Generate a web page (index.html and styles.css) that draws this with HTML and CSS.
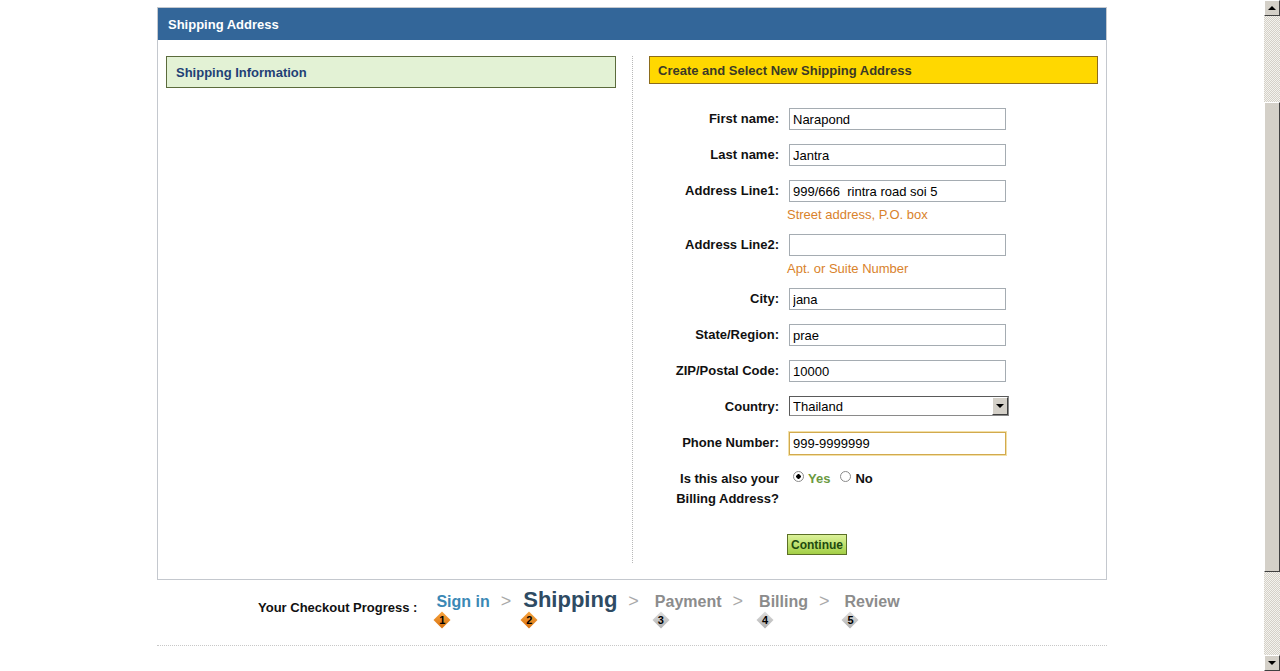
FILE: index.html
```html
<!DOCTYPE html>
<html lang="en">
<head>
  <meta charset="UTF-8">
  <title>Shipping Address</title>
  <link rel="stylesheet" href="styles.css">
</head>
<body>
  <div class="page">
    <div class="checkout">
      <div class="panel">
        <div class="panel-title">Shipping Address</div>
        <div class="panel-body">
          <div class="col-left">
            <div class="info-box">Shipping Information</div>
          </div>
          <div class="col-right">
            <div class="new-box">Create and Select New Shipping Address</div>
            <form class="address-form">
              <div class="row">
                <label for="first">First name:</label>
                <div class="field"><input type="text" id="first" value="Narapond"></div>
              </div>
              <div class="row">
                <label for="last">Last name:</label>
                <div class="field"><input type="text" id="last" value="Jantra"></div>
              </div>
              <div class="row">
                <label for="addr1">Address Line1:</label>
                <div class="field">
                  <input type="text" id="addr1" value="999/666  rintra road soi 5">
                  <div class="hint">Street address, P.O. box</div>
                </div>
              </div>
              <div class="row">
                <label for="addr2">Address Line2:</label>
                <div class="field">
                  <input type="text" id="addr2" value="">
                  <div class="hint">Apt. or Suite Number</div>
                </div>
              </div>
              <div class="row">
                <label for="city">City:</label>
                <div class="field"><input type="text" id="city" value="jana"></div>
              </div>
              <div class="row">
                <label for="state">State/Region:</label>
                <div class="field"><input type="text" id="state" value="prae"></div>
              </div>
              <div class="row">
                <label for="zip">ZIP/Postal Code:</label>
                <div class="field"><input type="text" id="zip" value="10000"></div>
              </div>
              <div class="row">
                <label for="country">Country:</label>
                <div class="field">
                  <div class="select-wrap">
                    <select id="country">
                      <option>Thailand</option>
                    </select>
                    <span class="select-arrow"></span>
                  </div>
                </div>
              </div>
              <div class="row">
                <label for="phone">Phone Number:</label>
                <div class="field"><input type="text" id="phone" class="focused" value="999-9999999"></div>
              </div>
              <div class="row row-billing">
                <label>Is this also your<br>Billing Address?</label>
                <div class="field choices">
                  <input type="radio" name="billing" id="billYes" checked>
                  <label for="billYes" class="choice-yes">Yes</label>
                  <input type="radio" name="billing" id="billNo">
                  <label for="billNo" class="choice-no">No</label>
                </div>
              </div>
              <div class="row row-submit">
                <span></span>
                <div class="field"><button type="button" class="btn-continue">Continue</button></div>
              </div>
            </form>
          </div>
        </div>
      </div>

      <div class="progress">
        <div class="progress-label">Your Checkout Progress :</div>
        <div class="step step-done">
          <span class="step-name">Sign in</span>
          <span class="badge">1</span>
        </div>
        <span class="sep">&gt;</span>
        <div class="step step-current">
          <span class="step-name">Shipping</span>
          <span class="badge">2</span>
        </div>
        <span class="sep">&gt;</span>
        <div class="step">
          <span class="step-name">Payment</span>
          <span class="badge">3</span>
        </div>
        <span class="sep">&gt;</span>
        <div class="step">
          <span class="step-name">Billing</span>
          <span class="badge">4</span>
        </div>
        <span class="sep sep-last">&gt;</span>
        <div class="step">
          <span class="step-name">Review</span>
          <span class="badge">5</span>
        </div>
      </div>
      <div class="progress-rule"></div>
    </div>
  </div>

  <!-- old-style window scrollbar -->
  <div class="scrollbar">
    <div class="sb-btn sb-up"></div>
    <div class="sb-track"><div class="sb-thumb"></div></div>
    <div class="sb-btn sb-down"></div>
  </div>
</body>
</html>
```

FILE: styles.css
```css
body {
  margin: 0;
  height: 671px;
  overflow: hidden;
  background-color: #fff;
  font-family: "Liberation Sans", Arial, sans-serif;
  color: #111;
}

.page {
  margin-right: 16px;
  padding-top: 7px;
}

.checkout {
  width: 950px;
  margin: 0 auto;
}

.panel {
  border: 1px solid #c4c8ce;
}

.panel-title {
  height: 32px;
  line-height: 34px;
  padding-left: 10px;
  background-color: #336699;
  color: #fff;
  font-size: 13px;
  font-weight: bold;
}

.panel-body {
  display: flex;
  padding: 16px 8px;
}

.col-left {
  width: 450px;
  margin-right: 16px;
}

.col-right {
  flex: 1;
  border-left: 1px dotted #b8b8b8;
  padding-left: 16px;
}

.info-box {
  height: 30px;
  line-height: 32px;
  padding-left: 9px;
  background-color: #e3f2d5;
  border: 1px solid #5b6b3c;
  color: #1f4175;
  font-size: 13px;
  font-weight: bold;
}

.new-box {
  height: 26px;
  line-height: 28px;
  padding-left: 8px;
  background-color: #ffd800;
  border: 1px solid #8c6c1c;
  color: #3b3a26;
  font-size: 13px;
  font-weight: bold;
}

/* Form */
.address-form {
  margin-top: 24px;
}

.row {
  display: grid;
  grid-template-columns: 130px 1fr;
  column-gap: 10px;
  margin-bottom: 14px;
}

.row > label {
  text-align: right;
  font-size: 13px;
  font-weight: bold;
  line-height: 22px;
  color: #111;
}

.row-billing {
  margin-bottom: 25px;
}

.row-billing > label {
  line-height: 20px;
}

.row-submit {
  margin-bottom: 8px;
}

.field input[type="text"] {
  display: block;
  box-sizing: border-box;
  width: 217px;
  height: 22px;
  margin: 0;
  padding: 0 3px;
  border: 1px solid #a5acb2;
  font-family: "Liberation Sans", Arial, sans-serif;
  font-size: 13px;
  color: #000;
  background: #fff;
}

.field input.focused {
  height: 23px;
  border-color: #d2aa4e;
  box-shadow: 0 0 0 1px #f2e0a8;
}

.hint {
  margin: 5px 0 -3px -2px;
  line-height: 16px;
  font-size: 13px;
  color: #d9822b;
}

.select-wrap {
  position: relative;
  width: 220px;
  height: 20px;
}

.select-wrap select {
  appearance: none;
  -webkit-appearance: none;
  box-sizing: border-box;
  width: 100%;
  height: 20px;
  margin: 0;
  padding: 0 0 0 3px;
  border: 1px solid #8a8a8a;
  border-top-color: #5a5a5a;
  border-left-color: #5a5a5a;
  border-radius: 0;
  background: #fff;
  font-family: "Liberation Sans", Arial, sans-serif;
  font-size: 13px;
  color: #000;
}

/* dropdown button drawn over the select */
.select-arrow {
  position: absolute;
  right: 1px;
  top: 1px;
  box-sizing: border-box;
  width: 16px;
  height: 18px;
  background-color: #d4d0c8;
  border: 1px solid;
  border-color: #fff #404040 #404040 #fff;
  pointer-events: none;
}

.select-arrow::after {
  content: '';
  position: absolute;
  left: 3px;
  top: 6px;
  border-top: 4px solid #000;
  border-left: 4px solid transparent;
  border-right: 4px solid transparent;
}

.choices {
  display: flex;
  align-items: flex-start;
  line-height: 20px;
  font-size: 13px;
  font-weight: bold;
}

.choices input[type="radio"] {
  appearance: none;
  -webkit-appearance: none;
  width: 11px;
  height: 11px;
  margin: 2px 4px 0 4px;
  border: 1px solid #8a8a8a;
  border-radius: 50%;
  background: #fff;
}

.choices input[type="radio"]:checked {
  background: radial-gradient(circle, #000 0 2px, #fff 2.5px);
}

.choice-yes {
  color: #6b9a3f;
  margin-right: 6px;
}

.choice-no {
  color: #111;
}

.btn-continue {
  width: 60px;
  height: 21px;
  margin-left: -2px;
  padding: 0;
  border: 1px solid #5b7026;
  background: linear-gradient(#dcf29a, #a3cf46);
  font-family: "Liberation Sans", Arial, sans-serif;
  font-size: 12px;
  font-weight: bold;
  color: #1f4a0f;
  cursor: pointer;
}

/* Checkout progress */
.progress {
  display: flex;
  align-items: baseline;
  padding-left: 101px;
  margin-top: 8px;
}

.progress-label {
  align-self: center;
  margin-right: 19px;
  font-size: 13px;
  font-weight: bold;
  line-height: 16px;
}

.step-name {
  display: block;
  font-size: 16px;
  font-weight: bold;
  line-height: 20px;
  color: #8c8c8c;
}

.step-done .step-name {
  color: #3b88b5;
}

.step-current {
  margin-left: -4px;
}

.step-current .step-name {
  font-size: 22px;
  line-height: 24px;
  color: #2e4b63;
}

.badge {
  display: block;
  position: relative;
  z-index: 0;
  width: 16px;
  height: 16px;
  margin: 0 0 0 -2px;
  text-align: center;
  font-size: 11px;
  font-weight: bold;
  line-height: 16px;
  color: #000;
}

.badge::before {
  content: '';
  position: absolute;
  z-index: -1;
  left: 2px;
  top: 2px;
  width: 12px;
  height: 12px;
  background: linear-gradient(135deg, #dedede, #b0b0b0);
  transform: rotate(45deg);
}

.step-done .badge::before,
.step-current .badge::before {
  background: linear-gradient(135deg, #f7a540, #d8700c);
}

.sep {
  margin: 0 16px 0 11px;
  font-size: 18px;
  color: #a9a9a9;
}

.sep-last {
  margin-right: 15px;
}

.progress-rule {
  margin-top: 17px;
  border-top: 1px dotted #c8c8c8;
}

/* Scrollbar */
.scrollbar {
  position: fixed;
  top: 0;
  right: 0;
  width: 16px;
  height: 671px;
  display: flex;
  flex-direction: column;
}

.sb-btn {
  position: relative;
  box-sizing: border-box;
  height: 16px;
  background-color: #d4d0c8;
  border: 1px solid;
  border-color: #fff #404040 #404040 #fff;
}

.sb-up::after,
.sb-down::after {
  content: '';
  position: absolute;
  left: 3px;
  border-left: 4px solid transparent;
  border-right: 4px solid transparent;
}

.sb-up::after {
  top: 5px;
  border-bottom: 4px solid #000;
}

.sb-down::after {
  top: 5px;
  border-top: 4px solid #000;
}

.sb-track {
  flex: 1;
  padding-top: 86px;
  background-color: #f4f3ee;
  background-image: repeating-conic-gradient(#d4d0c8 0 25%, #f4f3ee 0 50%);
  background-size: 2px 2px;
}

.sb-thumb {
  box-sizing: border-box;
  height: 470px;
  background-color: #d4d0c8;
  border: 1px solid;
  border-color: #fff #404040 #404040 #fff;
}
```
